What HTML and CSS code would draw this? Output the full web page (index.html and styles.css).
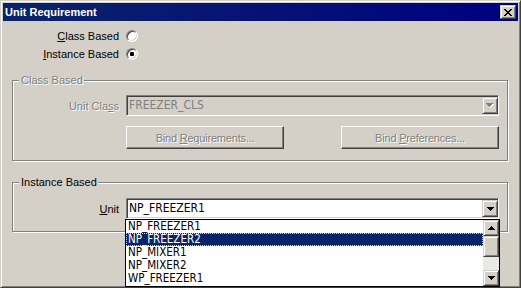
FILE: index.html
```html
<!DOCTYPE html>
<html lang="en">
<head>
<meta charset="utf-8">
<title>Unit Requirement</title>
<link rel="stylesheet" href="styles.css">
</head>
<body>
<div class="window">
  <div class="titlebar">
    <span class="title">Unit Requirement</span>
    <div class="close-btn">
      <svg width="8" height="7" viewBox="0 0 8 7" shape-rendering="crispEdges"><path d="M0 0h2v1H0zM6 0h2v1H6zM1 1h2v1H1zM5 1h2v1H5zM2 2h4v1H2zM3 3h2v1H3zM2 4h4v1H2zM1 5h2v1H1zM5 5h2v1H5zM0 6h2v1H0zM6 6h2v1H6z" fill="#000"/></svg>
    </div>
  </div>
  <div class="content">
    <div class="radios">
      <div class="radio-row">
        <span class="label"><u>C</u>lass Based</span>
        <span class="radio"></span>
      </div>
      <div class="radio-row">
        <span class="label"><u>I</u>nstance Based</span>
        <span class="radio checked"></span>
      </div>
    </div>

    <div class="group group-class">
      <div class="group-title disabled">Class Based</div>
      <div class="group-grid">
        <span class="field-label disabled">Unit Cla<u>s</u>s</span>
        <div class="combo is-disabled">
          <span class="combo-text">FREEZER_CLS</span>
          <span class="arrow-btn">
            <svg width="8" height="5" viewBox="0 0 8 5" shape-rendering="crispEdges"><path d="M1 1h7v1H1zM2 2h5v1H2zM3 3h3v1H3zM4 4h1v1H4z" fill="#fff"/><path d="M0 0h7v1H0zM1 1h5v1H1zM2 2h3v1H2zM3 3h1v1H3z" fill="#808080"/></svg>
          </span>
        </div>
        <div class="buttons">
          <div class="btn disabled"><span>Bind <u>R</u>equirements...</span></div>
          <div class="btn disabled"><span>Bind <u>P</u>references...</span></div>
        </div>
      </div>
    </div>

    <div class="group group-instance">
      <div class="group-title">Instance Based</div>
      <div class="group-grid">
        <span class="field-label"><u>U</u>nit</span>
        <div class="combo-cell">
          <div class="combo">
            <span class="combo-text">NP_FREEZER1</span>
            <span class="arrow-btn">
              <svg width="7" height="4" viewBox="0 0 7 4" shape-rendering="crispEdges"><path d="M0 0h7v1H0zM1 1h5v1H1zM2 2h3v1H2zM3 3h1v1H3z" fill="#000"/></svg>
            </span>
          </div>
          <div class="dropdown">
            <div class="list">
              <div class="item">NP_FREEZER1</div>
              <div class="item selected">NP_FREEZER2</div>
              <div class="item">NP_MIXER1</div>
              <div class="item">NP_MIXER2</div>
              <div class="item">WP_FREEZER1</div>
            </div>
            <div class="scrollbar">
              <span class="sb-btn">
                <svg width="7" height="4" viewBox="0 0 7 4" shape-rendering="crispEdges"><path d="M3 0h1v1H3zM2 1h3v1H2zM1 2h5v1H1zM0 3h7v1H0z" fill="#000"/></svg>
              </span>
              <span class="sb-thumb"></span>
              <span class="sb-track"></span>
              <span class="sb-btn">
                <svg width="7" height="4" viewBox="0 0 7 4" shape-rendering="crispEdges"><path d="M0 0h7v1H0zM1 1h5v1H1zM2 2h3v1H2zM3 3h1v1H3z" fill="#000"/></svg>
              </span>
            </div>
          </div>
        </div>
      </div>
    </div>
  </div>
</div>
</body>
</html>
```

FILE: styles.css
```css
* {
  box-sizing: border-box;
}

html,
body {
  margin: 0;
  padding: 0;
}

body {
  background: #d4d0c8;
  font-family: "Liberation Sans", Arial, sans-serif;
  font-size: 11px;
  line-height: 12px;
  color: #000;
}

.window {
  width: 521px;
  height: 288px;
  display: flex;
  flex-direction: column;
  padding: 2px;
  background: #d4d0c8;
  border: 1px solid;
  border-color: #d4d0c8 #404040 #404040 #d4d0c8;
  box-shadow: inset 1px 1px 0 #fff, inset -1px -1px 0 #808080;
  overflow: hidden;
}

/* Title bar */
.titlebar {
  flex: none;
  height: 18px;
  display: flex;
  align-items: center;
  justify-content: space-between;
  padding: 0 2px;
  background: linear-gradient(to right, #0a246a, #000080);
}

.title {
  color: #fff;
  font-weight: bold;
  line-height: 18px;
  white-space: nowrap;
}

.close-btn {
  width: 16px;
  height: 14px;
  padding: 3px 0 0 3px;
  background: #d4d0c8;
  border: 1px solid;
  border-color: #d4d0c8 #404040 #404040 #d4d0c8;
  box-shadow: inset 1px 1px 0 #fff, inset -1px -1px 0 #808080;
}

.close-btn svg,
.arrow-btn svg,
.sb-btn svg {
  display: block;
}

/* Content */
.content {
  flex: 1;
  padding: 9px 0 0 0;
}

.radios {
  display: flex;
  flex-direction: column;
  gap: 6px;
}

.radio-row {
  display: grid;
  grid-template-columns: 116px 12px;
  column-gap: 7px;
  height: 12px;
  align-items: center;
}

.label {
  text-align: right;
  white-space: nowrap;
}

.radio {
  width: 12px;
  height: 12px;
  border-radius: 50%;
  background: #fff;
  border: 1px solid;
  border-color: #808080 #fff #fff #808080;
  box-shadow: inset 1px 1px 0 #404040, inset -1px -1px 0 #d4d0c8;
  display: flex;
  align-items: center;
  justify-content: center;
}

.radio.checked::after {
  content: "";
  width: 4px;
  height: 4px;
  border-radius: 1px;
  background: #000;
}

/* Group boxes */
.group {
  margin-left: 9px;
  width: 496px;
  border: 1px solid #808080;
  box-shadow: 1px 1px 0 #fff, inset 1px 1px 0 #fff;
}

.group-class {
  margin-top: 20px;
  height: 81px;
}

.group-instance {
  margin-top: 21px;
  height: 50px;
}

.group-title {
  width: max-content;
  height: 12px;
  margin: -7px 0 0 6px;
  padding: 0 1px 0 2px;
  background: #d4d0c8;
  white-space: nowrap;
}

.group-grid {
  display: grid;
  grid-template-columns: 106px 373px;
  column-gap: 7px;
}

.group-class .group-grid {
  margin-top: 9px;
  row-gap: 10px;
}

.group-instance .group-grid {
  margin-top: 10px;
}

.field-label {
  align-self: center;
  text-align: right;
  white-space: nowrap;
}

.disabled {
  color: #808080;
  text-shadow: 1px 1px 0 #fff;
}

/* Buttons */
.buttons {
  grid-column: 2;
  display: flex;
  justify-content: space-between;
}

.btn {
  width: 158px;
  height: 23px;
  display: flex;
  align-items: center;
  justify-content: center;
  border: 1px solid;
  border-color: #fff #404040 #404040 #fff;
  box-shadow: inset -1px -1px 0 #808080;
  white-space: nowrap;
  letter-spacing: -0.2px;
}

/* Combo boxes */
.combo-cell {
  position: relative;
}

.combo {
  height: 21px;
  display: flex;
  padding: 1px 0 1px 1px;
  background: #fff;
  border: 1px solid;
  border-color: #808080 #fff #fff #808080;
  box-shadow: inset 1px 1px 0 #404040, inset -1px -1px 0 #d4d0c8;
}

.combo.is-disabled {
  background: #d4d0c8;
}

.combo-text {
  flex: 1;
  padding-left: 1px;
  font-family: "DejaVu Sans Condensed", "Liberation Sans", sans-serif;
  font-size: 12px;
  line-height: 17px;
  white-space: nowrap;
}

.combo.is-disabled .combo-text {
  color: #808080;
}

.arrow-btn,
.sb-btn {
  flex: none;
  width: 16px;
  display: flex;
  align-items: center;
  justify-content: center;
  background: #d4d0c8;
  border: 1px solid;
  border-color: #d4d0c8 #404040 #404040 #d4d0c8;
  box-shadow: inset 1px 1px 0 #fff, inset -1px -1px 0 #808080;
}

.arrow-btn {
  height: 17px;
}

/* Drop-down list (overlay) */
.dropdown {
  position: absolute;
  left: -1px;
  top: 21px;
  width: 375px;
  height: 68px;
  display: flex;
  background: #fff;
  border: 1px solid #000;
  z-index: 2;
}

.list {
  flex: 1;
}

.item {
  height: 13px;
  padding-left: 2px;
  font-family: "DejaVu Sans Condensed", "Liberation Sans", sans-serif;
  font-size: 11.5px;
  line-height: 13px;
  white-space: nowrap;
}

.item.selected {
  background: #0a246a;
  color: #fff;
  outline: 1px dotted #e8d89c;
  outline-offset: -1px;
}

.scrollbar {
  width: 16px;
  display: flex;
  flex-direction: column;
  background: #ebe9e5;
}

.sb-btn {
  height: 16px;
}

.sb-thumb {
  height: 21px;
  background: #d4d0c8;
  border: 1px solid;
  border-color: #d4d0c8 #404040 #404040 #d4d0c8;
  box-shadow: inset 1px 1px 0 #fff, inset -1px -1px 0 #808080;
}

.sb-track {
  flex: 1;
}
```
